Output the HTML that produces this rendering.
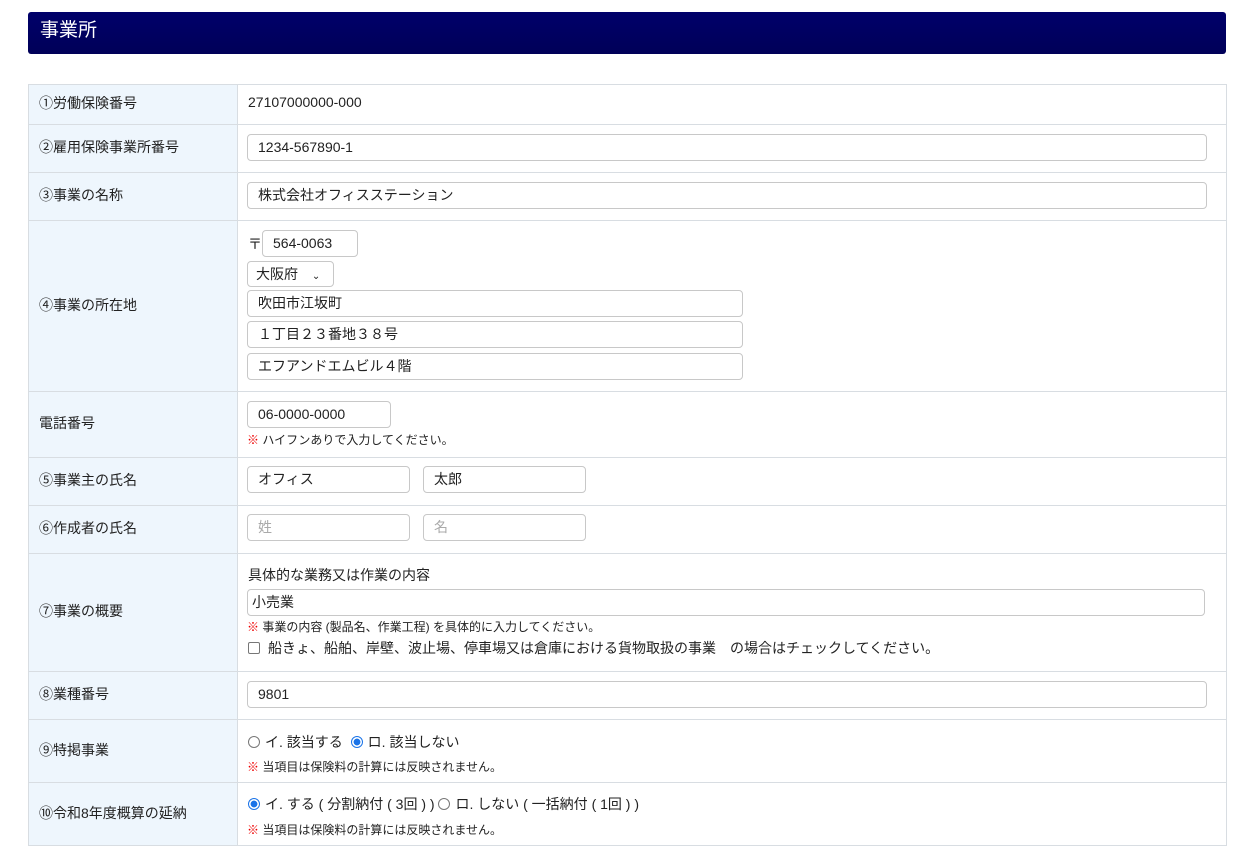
<html><head><style>
*{box-sizing:border-box}
body{margin:0;width:1251px;height:855px;background:#fff;font-family:"Liberation Sans","Noto Sans CJK JP",sans-serif;font-size:14px;color:#222;position:relative;overflow:hidden}
.hd{position:absolute;left:28px;top:12px;width:1198px;height:42px;background:linear-gradient(#00006a,#000058);border-radius:3px;color:#fff;font-size:19px;line-height:38px;padding-left:12px}
.row{position:absolute;left:28px;width:1199px;border:1px solid #d8dde2;border-top:none}
.lab{position:absolute;left:0;top:0;bottom:3px;width:209px;background:#eef6fd;border-right:1px solid #d8dde2;padding-left:10px;display:flex;align-items:center}
.lab:after{content:"";position:absolute;left:0;right:-1px;bottom:-3px;height:3px;background:#eef6fd;border-right:1px solid #d8dde2}
.a{position:absolute}
.in{position:absolute;height:27px;border:1px solid #c8c8c8;border-radius:4px;padding-left:10px;line-height:25px;background:#fff}
.ph{color:#aaa}
.n{font-size:12px;position:absolute}
.n b{color:#e00;font-weight:normal}
.rd{display:inline-block;width:12px;height:12px;border:1px solid #777;border-radius:50%;vertical-align:-1px;margin-right:5px}
.rd.on{border:1px solid #1a73e8;background:radial-gradient(#1a73e8 45%,#fff 50%)}
</style></head><body>
<div class="hd">事業所</div>
<div class="row" style="top:84px;height:41px;border-top:1px solid #d8dde2"><div class="lab">①労働保険番号</div><div class="a" style="left:219px;top:9px">27107000000-000</div></div>
<div class="row" style="top:125px;height:48px"><div class="lab">②雇用保険事業所番号</div><div class="in" style="left:218px;top:9px;width:960px">1234-567890-1</div></div>
<div class="row" style="top:173px;height:48px"><div class="lab">③事業の名称</div><div class="in" style="left:218px;top:9px;width:960px">株式会社オフィスステーション</div></div>
<div class="row" style="top:221px;height:171px"><div class="lab">④事業の所在地</div>
<div class="a" style="left:219px;top:13px">〒</div><div class="in" style="left:233px;top:9px;width:96px">564-0063</div>
<div class="in" style="left:218px;top:40px;width:87px;height:26px;padding-left:8px">大阪府 <span style="margin-left:10px;font-size:10px">⌄</span></div>
<div class="in" style="left:218px;top:69px;width:496px">吹田市江坂町</div>
<div class="in" style="left:218px;top:100px;width:496px">１丁目２３番地３８号</div>
<div class="in" style="left:218px;top:132px;width:496px">エフアンドエムビル４階</div></div>
<div class="row" style="top:392px;height:66px"><div class="lab">電話番号</div><div class="in" style="left:218px;top:9px;width:144px">06-0000-0000</div><div class="n" style="left:218px;top:39px"><b>※</b> ハイフンありで入力してください。</div></div>
<div class="row" style="top:458px;height:48px"><div class="lab">⑤事業主の氏名</div><div class="in" style="left:218px;top:8px;width:163px">オフィス</div><div class="in" style="left:394px;top:8px;width:163px">太郎</div></div>
<div class="row" style="top:506px;height:48px"><div class="lab">⑥作成者の氏名</div><div class="in ph" style="left:218px;top:8px;width:163px">姓</div><div class="in ph" style="left:394px;top:8px;width:163px">名</div></div>
<div class="row" style="top:554px;height:118px"><div class="lab">⑦事業の概要</div>
<div class="a" style="left:219px;top:11px">具体的な業務又は作業の内容</div>
<div class="in" style="left:218px;top:35px;width:958px;padding-left:4px">小売業</div>
<div class="n" style="left:218px;top:64px"><b>※</b> 事業の内容 (製品名、作業工程) を具体的に入力してください。</div>
<div class="a" style="left:219px;top:84px"><span style="display:inline-block;width:12px;height:12px;border:1px solid #777;border-radius:2px;vertical-align:-1px;margin-right:8px"></span>船きょ、船舶、岸壁、波止場、停車場又は倉庫における貨物取扱の事業　の場合はチェックしてください。</div></div>
<div class="row" style="top:672px;height:48px"><div class="lab">⑧業種番号</div><div class="in" style="left:218px;top:9px;width:960px">9801</div></div>
<div class="row" style="top:720px;height:63px"><div class="lab">⑨特掲事業</div><div class="a" style="left:219px;top:12px"><span class="rd"></span>イ. 該当する <span class="rd on" style="margin-left:4px"></span>ロ. 該当しない</div><div class="n" style="left:218px;top:38px"><b>※</b> 当項目は保険料の計算には反映されません。</div></div>
<div class="row" style="top:783px;height:63px"><div class="lab">⑩令和8年度概算の延納</div><div class="a" style="left:219px;top:11px"><span class="rd on"></span>イ. する ( 分割納付 ( 3回 ) ) <span class="rd"></span>ロ. しない ( 一括納付 ( 1回 ) )</div><div class="n" style="left:218px;top:38px"><b>※</b> 当項目は保険料の計算には反映されません。</div></div>
</body></html>
